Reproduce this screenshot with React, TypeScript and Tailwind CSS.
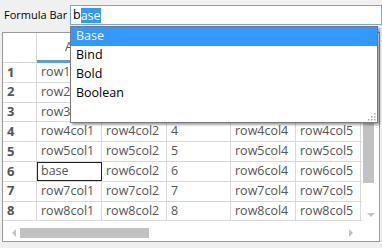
import React from "react"

const cols = ["A", "B", "C", "D", "E"]
const colWidths = [65, 65, 64, 65, 65]

function cellText(r: number, c: number) {
  if (r === 6 && c === 0) return "base"
  if (c === 2) return String(r)
  return `row${r}col${c + 1}`
}

function Dropdown() {
  const items = ["Base", "Bind", "Bold", "Boolean"]
  return (
    <div className="absolute left-[70px] top-[26px] w-[308px] h-[97px] bg-white border border-[#7a7a7a] shadow-[2px_2px_2px_rgba(0,0,0,0.35)]">
      {items.map((it, i) => (
        <div
          key={it}
          className={`h-[19px] pl-[5px] flex items-center text-[12.5px] ${i === 0 ? "bg-[#3399ff] text-white" : "text-black"}`}
        >
          {it}
        </div>
      ))}
      <svg className="absolute right-[1px] bottom-[1px]" width="10" height="10" viewBox="0 0 10 10">
        {[
          [8, 2],
          [8, 5],
          [5, 5],
          [8, 8],
          [5, 8],
          [2, 8],
        ].map(([x, y]) => (
          <rect key={`${x}-${y}`} x={x} y={y} width="1.5" height="1.5" fill="#a8a8a8" />
        ))}
      </svg>
    </div>
  )
}

export default function App() {
  const rows = [1, 2, 3, 4, 5, 6, 7, 8]
  return (
    <div
      className="relative w-[382px] h-[248px] bg-[#f0f0f0] overflow-hidden"
      style={{ fontFamily: '"Open Sans", "Noto Sans", sans-serif' }}
    >
      {/* formula bar */}
      <div className="flex items-center h-[20px] mt-[5px]">
        <div className="w-[70px] pl-[4px] text-[11px] text-black whitespace-nowrap">Formula Bar</div>
        <div className="flex-1 h-[20px] bg-white border border-[#7aa6dc] flex items-center pl-[2px] text-[12.5px]">
          <span className="text-black">b</span>
          <span className="bg-[#3399ff] text-white leading-[15px]">ase</span>
        </div>
      </div>

      {/* grid */}
      <div className="mt-[7px] ml-[2px] w-[378px] h-[210px] border border-[#9a9a9a] bg-white flex flex-col">
        <div className="flex flex-1 min-h-0">
          <div className="flex-1 overflow-hidden">
            <div className="flex h-[30px] border-b border-[#d8d8d8]">
              <div className="w-[34px] shrink-0 border-r border-[#d8d8d8] bg-white" />
              {cols.map((c, i) => (
                <div
                  key={c}
                  style={{ width: colWidths[i] }}
                  className="shrink-0 relative flex items-center justify-center text-[12.5px] text-[#555] border-r border-[#d8d8d8] bg-white"
                >
                  {c}
                  {i === 0 && <div className="absolute left-0 right-0 bottom-[-1px] h-[3px] bg-[#5aa0d8]" />}
                </div>
              ))}
            </div>
            {rows.map((r) => (
              <div key={r} className="flex h-[19.8px] border-b border-[#d8d8d8]">
                <div className="w-[34px] shrink-0 border-r border-[#d8d8d8] flex items-center pl-[4px] text-[13px] font-bold text-[#555]">
                  {r}
                </div>
                {cols.map((c, i) => (
                  <div
                    key={c}
                    style={{ width: colWidths[i] }}
                    className={`shrink-0 flex items-center pl-[4px] text-[12.5px] text-[#555] whitespace-nowrap overflow-hidden border-r border-[#d8d8d8] ${r === 6 && i === 0 ? "outline outline-[1.5px] outline-[#222] -outline-offset-1" : ""}`}
                  >
                    {cellText(r, i)}
                  </div>
                ))}
              </div>
            ))}
          </div>
          {/* vertical scrollbar */}
          <div className="w-[17px] shrink-0 bg-white flex flex-col items-center">
            <div className="h-[6px]" />
            <svg width="8" height="5" viewBox="0 0 8 5" className="mt-[6px]">
              <path d="M0 5 L4 1 L8 5 Z" fill="#c2c2c2" />
            </svg>
            <div className="w-[11px] h-[125px] bg-[#c2c2c2] mt-[8px] ml-[-4px]" />
            <div className="flex-1" />
            <svg width="8" height="5" viewBox="0 0 8 5" className="mb-[6px]">
              <path d="M0 0 L4 4 L8 0 Z" fill="#c2c2c2" />
            </svg>
          </div>
        </div>
        {/* horizontal scrollbar */}
        <div className="h-[17px] shrink-0 bg-white flex items-center">
          <svg width="5" height="8" viewBox="0 0 5 8" className="ml-[8px]">
            <path d="M5 0 L1 4 L5 8 Z" fill="#c2c2c2" />
          </svg>
          <div className="ml-[4px] w-[129px] h-[10px] bg-[#c2c2c2]" />
          <div className="flex-1" />
          <svg width="5" height="8" viewBox="0 0 5 8" className="mr-[25px]">
            <path d="M0 0 L4 4 L0 8 Z" fill="#c2c2c2" />
          </svg>
        </div>
      </div>

      <Dropdown />
    </div>
  )
}
